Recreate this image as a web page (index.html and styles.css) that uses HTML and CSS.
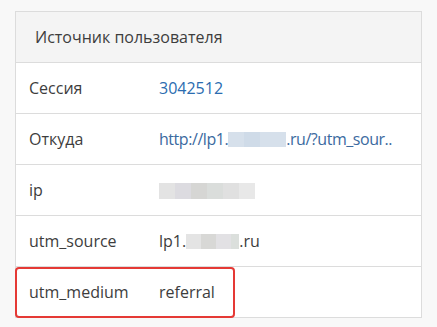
FILE: index.html
```html
<!DOCTYPE html>
<html lang="ru">
<head>
  <meta charset="UTF-8">
  <title>Источник пользователя</title>
  <link rel="stylesheet" href="styles.css">
</head>
<body>
  <div class="panel">
    <div class="panel-head">Источник пользователя</div>
    <div class="row">
      <div class="label">Сессия</div>
      <div class="value"><a href="#">3042512</a></div>
    </div>
    <div class="row">
      <div class="label">Откуда</div>
      <div class="value"><a href="#" class="url">http://lp1.<span class="blur blur-blue"></span>.ru/?utm_sour..</a></div>
    </div>
    <div class="row">
      <div class="label">ip</div>
      <div class="value"><span class="blur blur-ip"></span></div>
    </div>
    <div class="row">
      <div class="label">utm_source</div>
      <div class="value">lp1.<span class="blur blur-gray"></span>.ru</div>
    </div>
    <div class="row highlight">
      <div class="label">utm_medium</div>
      <div class="value">referral</div>
    </div>
  </div>
</body>
</html>
```

FILE: styles.css
```css
body {
  margin: 0;
  padding: 11px 15px;
  background-color: #f8f8f8;
  font-family: 'Open Sans', 'Liberation Sans', sans-serif;
  font-size: 16px;
  color: #3d3d3d;
}
.panel {
  width: 405px;
  background-color: #fff;
  border: 1px solid #dcdcdc;
}
.panel-head {
  background-color: #f4f4f4;
  height: 50px;
  line-height: 50px;
  padding-left: 19px;
  border-bottom: 1px solid #dcdcdc;
}
.row {
  display: flex;
  align-items: center;
  height: 50px;
  border-bottom: 1px solid #dcdcdc;
  position: relative;
}
.row:last-child {
  border-bottom: none;
}
.label {
  width: 130px;
  padding-left: 13px;
}
.value a {
  color: #2b6cb0;
  text-decoration: none;
}
.value a.url {
  color: #3b6aa0;
  letter-spacing: -0.45px;
}
.blur {
  display: inline-block;
  height: 15px;
  vertical-align: -2px;
}
.blur-blue {
  width: 58px;
  background: linear-gradient(90deg, #d6e0eb 0 16px, #cfdbe8 16px 32px, #d6e0eb 32px);
}
.blur-ip {
  width: 96px;
  height: 16px;
  vertical-align: -3px;
  background: linear-gradient(90deg, #e3e3e3 0 16px, #dcdbe0 16px 32px, #d6d6d4 32px 48px, #dadddb 48px 64px, #e0e0e0 64px 80px, #e8e8e8 80px);
}
.blur-gray {
  width: 53px;
  background: linear-gradient(90deg, #e4e4e4 0 15px, #d8d8d6 15px 30px, #e2e1e4 30px 45px, #dbdfdc 45px);
}
.highlight::after {
  content: "";
  position: absolute;
  left: -1px;
  top: 0;
  width: 220px;
  height: 51px;
  border: 2px solid #e53935;
  border-radius: 4px;
  box-sizing: border-box;
}
```
